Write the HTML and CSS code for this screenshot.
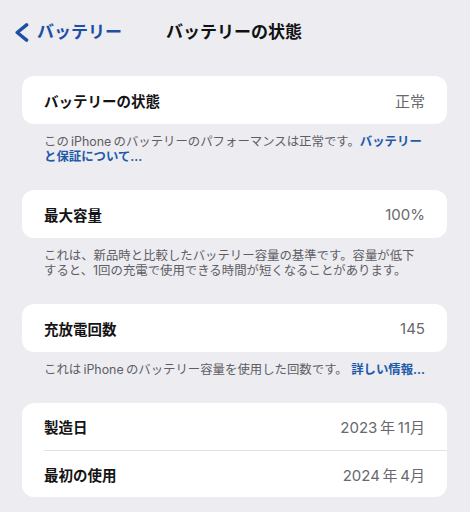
FILE: index.html
```html
<!DOCTYPE html>
<html lang="ja">
<head>
<meta charset="utf-8">
<title>バッテリーの状態</title>
<link rel="stylesheet" href="styles.css">
</head>
<body>
<header class="nav">
  <a class="back" href="#">
    <svg class="chev" width="14" height="19" viewBox="0 0 14 19" aria-hidden="true">
      <polyline points="11.6,1.9 2.2,9.5 11.6,17.1" fill="none" stroke="#1d4fa5" stroke-width="3.4" stroke-linecap="round" stroke-linejoin="round"/>
    </svg>
    <span>バッテリー</span>
  </a>
  <h1 class="title">バッテリーの状態</h1>
  <span></span>
</header>
<main class="content">
  <section class="group">
    <div class="card">
      <div class="row"><span class="label">バッテリーの状態</span><span class="value">正常</span></div>
    </div>
    <p class="note">この&#8201;iPhone&#8201;のバッテリーのパフォーマンスは正常です。<a class="link" href="#">バッテリー<br>と保証について...</a></p>
  </section>
  <section class="group">
    <div class="card">
      <div class="row"><span class="label">最大容量</span><span class="value">100%</span></div>
    </div>
    <p class="note">これは、新品時と比較したバッテリー容量の基準です。容量が低下<br>すると、1回の充電で使用できる時間が短くなることがあります。</p>
  </section>
  <section class="group">
    <div class="card">
      <div class="row"><span class="label">充放電回数</span><span class="value">145</span></div>
    </div>
    <p class="note">これは&#8201;iPhone&#8201;のバッテリー容量を使用した回数です。 <a class="link" href="#">詳しい情報...</a></p>
  </section>
  <section class="group">
    <div class="card">
      <div class="row"><span class="label">製造日</span><span class="value">2023&#8201;年&#8201;11月</span></div>
      <div class="row"><span class="label">最初の使用</span><span class="value">2024&#8201;年&#8201;4月</span></div>
    </div>
  </section>
</main>
</body>
</html>
```

FILE: styles.css
```css
* { box-sizing: border-box; }
html, body { margin: 0; padding: 0; }
body {
  width: 470px;
  height: 512px;
  overflow: hidden;
  background: #ececf1;
  font-family: "Inter", "Noto Sans CJK JP", sans-serif;
  color: #111;
}
.nav {
  height: 64px;
  display: grid;
  grid-template-columns: 1fr auto 1fr;
  align-items: center;
  padding: 0 17px 0 15px;
}
.back {
  display: flex;
  align-items: center;
  gap: 8px;
  color: #1d4fa5;
  text-decoration: none;
  font-size: 17px;
  font-weight: 600;
  line-height: 20px;
}
.chev { display: block; flex: none; }
.title {
  margin: 0;
  font-size: 17px;
  font-weight: 700;
  line-height: 20px;
  color: #111;
}
.content {
  padding: 12px 23px 0 22px;
}
.card {
  background: #fff;
  border-radius: 12px;
  padding-left: 22px;
}
.row {
  height: 48px;
  display: flex;
  align-items: center;
  justify-content: space-between;
  padding-right: 22px;
}
.row + .row {
  height: 47px;
  border-top: 1px solid #e2e2e6;
}
.card .row:first-child:not(:only-child) { height: 47px; }
.label {
  font-size: 14.5px;
  font-weight: 600;
  color: #141414;
}
.value {
  font-size: 15px;
  font-weight: 400;
  color: #68686d;
}
.note {
  margin: 0;
  padding: 10px 22px 26px 22px;
  font-size: 12.4px;
  line-height: 15px;
  color: #5e5e64;
  white-space: nowrap;
}
.link {
  color: #1f5aa8;
  font-weight: 600;
  text-decoration: none;
}
```
